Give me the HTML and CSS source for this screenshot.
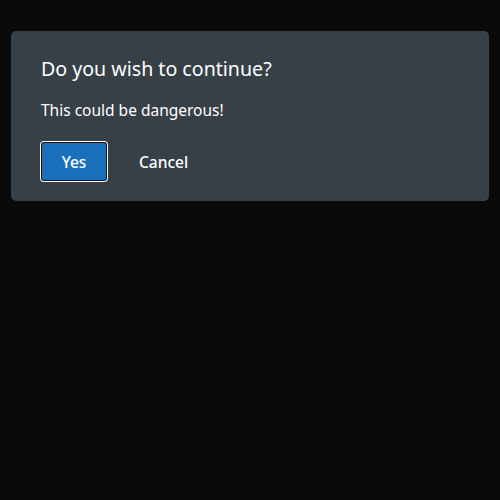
FILE: index.html
```html
<!DOCTYPE html>
<html>
<head>
<meta charset="utf-8">
<link rel="stylesheet" href="styles.css">
</head>
<body>
<div class="dialog">
  <h2 class="title">Do you wish to continue?</h2>
  <p class="message">This could be dangerous!</p>
  <div class="actions">
    <button class="btn btn-primary">Yes</button>
    <button class="btn btn-link">Cancel</button>
  </div>
</div>
</body>
</html>
```
FILE: styles.css
```css
html, body {
  margin: 0;
  background: #0a0a0a;
  height: 100%;
}
body {
  padding: 31px 11px;
  box-sizing: border-box;
  font-family: "Noto Sans", "Open Sans", sans-serif;
  color: #ffffff;
}
.dialog {
  background: #373f47;
  border-radius: 5px;
  padding: 24px 30px 19px 29px;
  height: 170px;
  box-sizing: border-box;
}
.title {
  margin: 0 0 0 1px;
  font-size: 19.6px;
  font-weight: 400;
  line-height: 28px;
}
.message {
  margin: 16px 0 0 1px;
  font-size: 15.5px;
  line-height: 22px;
}
.actions {
  display: flex;
  align-items: center;
  gap: 8px;
  margin-top: 20px;
}
.btn {
  font-family: inherit;
  font-size: 15.5px;
  font-weight: 500;
  color: #fff;
  border: none;
  background: none;
  height: 41px;
  padding: 0 20px;
  border-radius: 4px;
}
.btn-primary {
  width: 68px;
  background: #1a6fbb;
  box-shadow: inset 0 0 0 1px #fff, inset 0 0 0 2px #111;
}
.btn-link {
  padding: 0 23px;
}
```
